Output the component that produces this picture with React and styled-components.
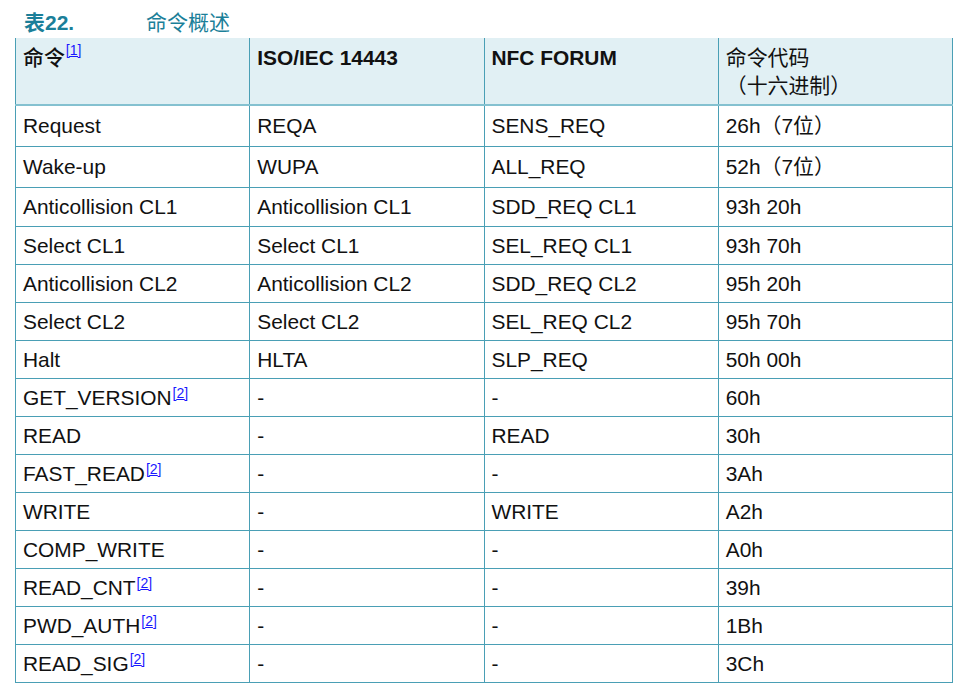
import React from "react"
import styled, { createGlobalStyle } from "styled-components"

const GlobalStyle = createGlobalStyle`
  body {
    margin: 0;
    background: #fff;
    font-family: "Liberation Sans", "Noto Sans CJK SC", sans-serif;
  }
`

const Page = styled.div`
  padding: 7px 0 0 15px;
  width: 959px;
  height: 688px;
  box-sizing: border-box;
`

const Caption = styled.div`
  display: flex;
  align-items: center;
  height: 27px;
  padding-left: 9px;
  margin-bottom: 4px;
  color: #1b7f99;
  font-size: 21px;
  font-weight: 700;
`

const CaptionNum = styled.span`
  width: 122px;
`

const CaptionTitle = styled.span`
  font-weight: 400;
`

const Table = styled.table`
  border-collapse: collapse;
  table-layout: fixed;
  width: 938px;
  border-left: 1px solid #4a9fb5;
  border-right: 1px solid #4a9fb5;
  border-bottom: 1px solid #4a9fb5;
  color: #111;
  font-size: 20.9px;
`

const HeadRow = styled.tr`
  height: 67px;
  background: #e1f0f4;
`

const HeadCell = styled.th`
  text-align: left;
  vertical-align: top;
  padding: 6px 7px 0;
  border-left: 1px solid #4a9fb5;
  border-bottom: 2px solid #84c1d0;
  font-weight: ${({ $weight }) => $weight || 700};
  line-height: 28px;
`

const Row = styled.tr`
  height: ${({ $h }) => $h}px;
`

const Cell = styled.td`
  vertical-align: top;
  padding: ${({ $cjk }) => ($cjk ? "5px" : "7px")} 7px 0;
  border-left: 1px solid #4a9fb5;
  border-top: 1px solid #4a9fb5;
  line-height: ${({ $cjk }) => ($cjk ? "29px" : "24px")};
  white-space: nowrap;
`

const Note = styled.a`
  font-size: 14px;
  color: #1a1aff;
  text-decoration: underline;
  vertical-align: top;
  line-height: 14px;
  position: relative;
  top: ${({ $head }) => ($head ? "-1px" : "0")};
  margin-left: 1px;
`

const rows = [
  ["Request", null, "REQA", "SENS_REQ", "26h（7位）", 41],
  ["Wake-up", null, "WUPA", "ALL_REQ", "52h（7位）", 41],
  ["Anticollision CL1", null, "Anticollision CL1", "SDD_REQ CL1", "93h 20h", 39],
  ["Select CL1", null, "Select CL1", "SEL_REQ CL1", "93h 70h", 38],
  ["Anticollision CL2", null, "Anticollision CL2", "SDD_REQ CL2", "95h 20h", 38],
  ["Select CL2", null, "Select CL2", "SEL_REQ CL2", "95h 70h", 38],
  ["Halt", null, "HLTA", "SLP_REQ", "50h 00h", 38],
  ["GET_VERSION", 2, "-", "-", "60h", 38],
  ["READ", null, "-", "READ", "30h", 38],
  ["FAST_READ", 2, "-", "-", "3Ah", 38],
  ["WRITE", null, "-", "WRITE", "A2h", 38],
  ["COMP_WRITE", null, "-", "-", "A0h", 38],
  ["READ_CNT", 2, "-", "-", "39h", 38],
  ["PWD_AUTH", 2, "-", "-", "1Bh", 38],
  ["READ_SIG", 2, "-", "-", "3Ch", 38],
]

const App = () => (
  <Page>
    <GlobalStyle />
    <Caption>
      <CaptionNum>表22.</CaptionNum>
      <CaptionTitle>命令概述</CaptionTitle>
    </Caption>
    <Table>
      <thead>
        <HeadRow>
          <HeadCell $weight={500}>
            命令<Note $head href="#n1">[1]</Note>
          </HeadCell>
          <HeadCell>ISO/IEC 14443</HeadCell>
          <HeadCell>NFC FORUM</HeadCell>
          <HeadCell $weight={400}>
            命令代码
            <br />
            （十六进制）
          </HeadCell>
        </HeadRow>
      </thead>
      <tbody>
        {rows.map(([cmd, note, iso, nfc, code, h]) => {
          const cjk = /位/.test(code)
          return (
            <Row key={cmd} $h={h}>
              <Cell $cjk={cjk}>
                {cmd}
                {note && <Note href={`#n${note}`}>[{note}]</Note>}
              </Cell>
              <Cell $cjk={cjk}>{iso}</Cell>
              <Cell $cjk={cjk}>{nfc}</Cell>
              <Cell $cjk={cjk}>{code}</Cell>
            </Row>
          )
        })}
      </tbody>
    </Table>
  </Page>
)

export default App
